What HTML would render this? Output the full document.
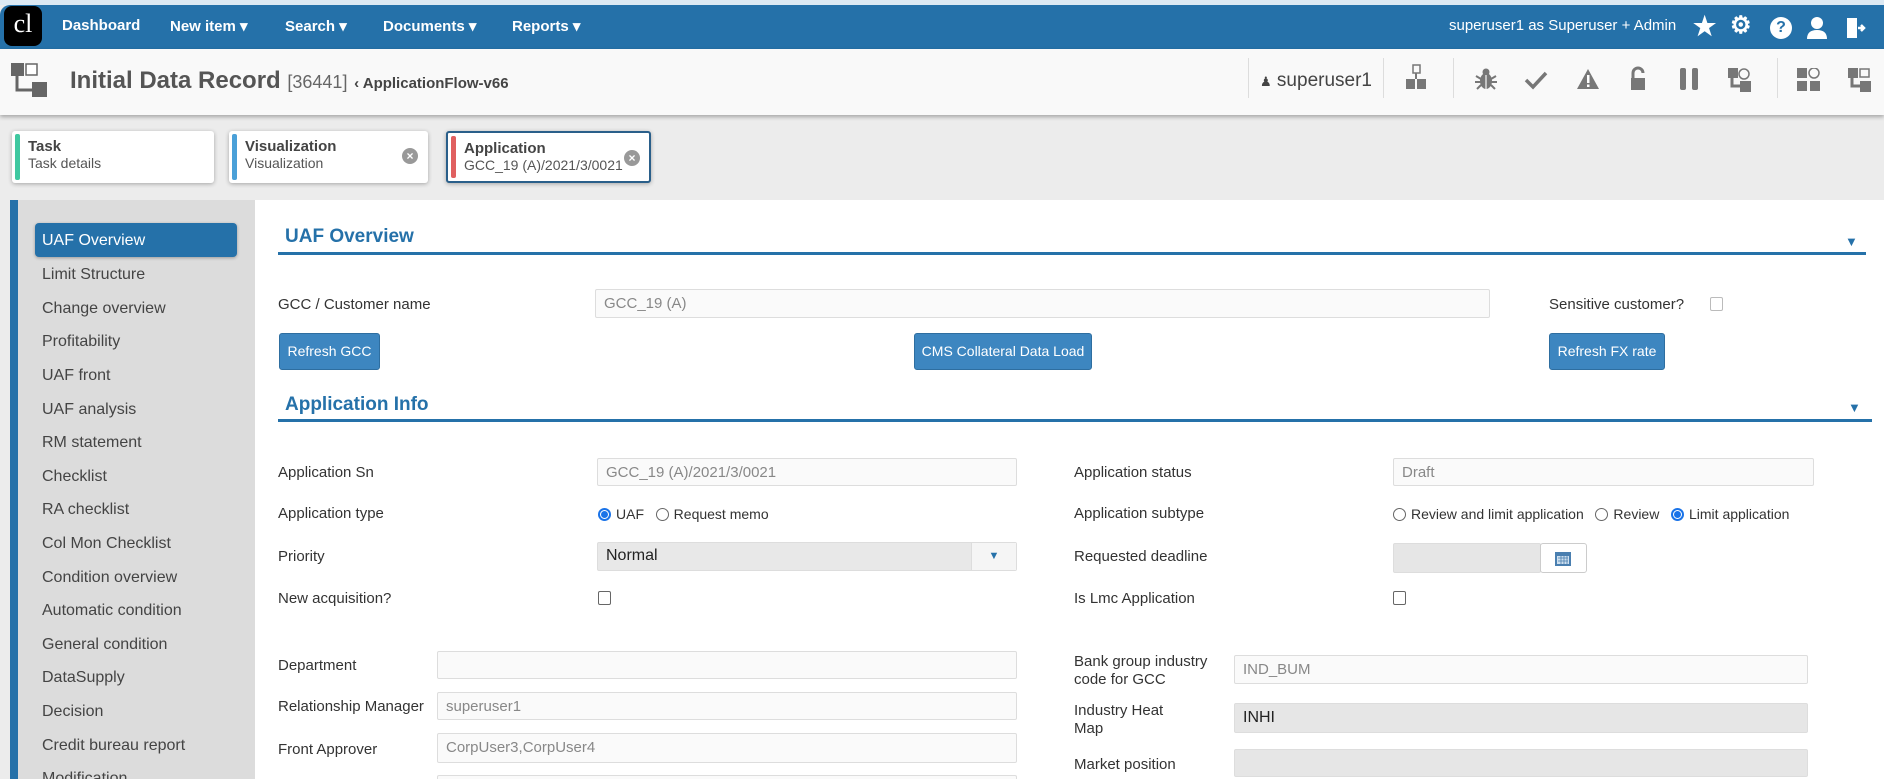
<!DOCTYPE html>
<html style="overflow:hidden;width:1884px;height:779px"><head><meta charset="utf-8"><style>
*{box-sizing:border-box;margin:0;padding:0}
body{width:1884px;height:779px;overflow:hidden;background:#ececec;font-family:"Liberation Sans Narrow","Liberation Sans",sans-serif;color:#333;position:relative}
.a{position:absolute}
.nav{left:0;top:5px;width:1884px;height:44px;background:#2571a9;border-top-left-radius:10px}
.nav .i{position:absolute;top:12px;color:#fff;font-weight:bold;font-size:15px}
.hdr{left:0;top:49px;width:1884px;height:66px;background:#f9f9f9;box-shadow:0 2px 4px rgba(0,0,0,.3)}
.tab{top:131px;height:52px;background:#fff;border-radius:3px;box-shadow:0 1px 4px rgba(0,0,0,.3);padding:7px 0 0 16px;font-size:14px}
.tab b{display:block;font-size:15px;color:#444}
.tab span{color:#555}
.tab .bar{position:absolute;left:3px;top:3px;bottom:3px;width:5px;border-radius:2px}
.x{position:absolute;top:17px;width:16px;height:16px;border-radius:50%;background:#999;color:#fff;font-size:12px;line-height:16px;text-align:center;font-weight:bold}
.side{left:10px;top:200px;width:245px;height:579px;background:#dcdcdc;border-left:8px solid #2571a9}
.si{position:absolute;left:42px;font-size:16px;color:#444}
.main{left:255px;top:200px;width:1629px;height:579px;background:#fff}
.h{position:absolute;font-size:19px;font-weight:bold;color:#2571a9}
.ln{position:absolute;height:3px;background:#2571a9}
.lb{position:absolute;font-size:15px;color:#333;line-height:18px}
.in{position:absolute;background:#fafafa;border:1px solid #ddd;border-radius:2px;font-size:15px;color:#888;padding:5px 8px}
.gr{background:#e6e6e6;color:#222}
.btn{position:absolute;top:333px;height:37px;background:#3d86c0;border:1px solid #2e6ea0;border-radius:3px;color:#fff;font-size:14px;text-align:center;line-height:35px}
.rd{display:inline-block;width:13px;height:13px;border:1px solid #666;border-radius:50%;vertical-align:-2px;margin-right:5px;position:relative}
.rd.on{border:2px solid #1a73e8}
.rd.on:after{content:"";position:absolute;left:1px;top:1px;width:7px;height:7px;border-radius:50%;background:#1a73e8}
.cb{position:absolute;width:13px;height:14px;border:1px solid #666;border-radius:2px}
</style></head><body>
<div class="a" style="left:0;top:0;width:1884px;height:5px;background:#dce9f3"></div>
<div class="a nav">
 <div class="a" style="left:4px;top:1px;width:38px;height:40px;background:#000;border-radius:8px;color:#fff;font-size:26px;text-align:center;line-height:36px;font-family:'Liberation Serif',serif">cl</div>
 <div class="i" style="left:62px">Dashboard</div>
 <div class="i" style="left:170px">New item ▾</div>
 <div class="i" style="left:285px">Search ▾</div>
 <div class="i" style="left:383px">Documents ▾</div>
 <div class="i" style="left:512px">Reports ▾</div>
 <div class="i" style="left:1449px;font-weight:normal;font-size:15px">superuser1 as Superuser + Admin</div>
 <div class="i" style="left:1693px;top:6px;font-size:26px">★</div>
 <div class="i" style="left:1730px;top:6px;font-size:24px">⚙</div>
 <div class="a" style="left:1770px;top:12px;width:22px;height:22px;border-radius:50%;background:#fff;color:#2571a9;font-weight:bold;text-align:center;line-height:22px;font-size:16px">?</div>
 <svg class="a" style="left:1806px;top:11px" width="22" height="24"><circle cx="11" cy="7" r="6" fill="#fff"/><path d="M1 23 Q1 14 11 14 Q21 14 21 23Z" fill="#fff"/></svg>
 <svg class="a" style="left:1845px;top:11px" width="22" height="24"><path d="M2 2h10v20H2z" fill="#fff"/><path d="M13 12h6M16 9l3 3-3 3" stroke="#fff" stroke-width="2.5" fill="none"/></svg>
</div>
<div class="a hdr">
 <svg class="a" style="left:11px;top:14px" width="36" height="36"><rect x="0" y="0" width="13" height="13" fill="#666"/><rect x="15" y="1" width="11" height="11" fill="#fff" stroke="#666" stroke-width="1.5"/><rect x="21" y="19" width="15" height="15" fill="#666"/><path d="M6 13v14h15" stroke="#666" stroke-width="3" fill="none"/></svg>
 <div class="a" style="left:70px;top:18px;font-size:24px;font-weight:bold;color:#555">Initial Data Record <span style="font-weight:normal;font-size:18px;color:#666">[36441]</span> <span style="font-size:15px;color:#444">‹ ApplicationFlow-v66</span></div>
 <div class="a" style="left:1248px;top:9px;width:1px;height:40px;background:#ddd"></div>
 <div class="a" style="left:1260px;top:21px;font-size:19px;color:#444"><span style="font-size:13px">♟</span> superuser1</div>
 <div class="a" style="left:1383px;top:9px;width:1px;height:40px;background:#ddd"></div>
 <div class="a" style="left:1453px;top:9px;width:1px;height:40px;background:#ddd"></div>
 <div class="a" style="left:1777px;top:9px;width:1px;height:40px;background:#ddd"></div>
</div>
<svg class="a" style="left:1405px;top:64px" width="22" height="26"><rect x="8" y="1" width="7" height="8" fill="none" stroke="#777" stroke-width="1.5"/><rect x="1" y="15" width="9" height="10" fill="#777"/><rect x="12" y="15" width="9" height="10" fill="#777"/><path d="M11 9v6" stroke="#777" stroke-width="2"/></svg>
<svg class="a" style="left:1474px;top:67px" width="24" height="24"><ellipse cx="12" cy="14" rx="6" ry="8" fill="#777"/><circle cx="12" cy="5" r="3.5" fill="#777"/><path d="M2 9l5 3M22 9l-5 3M1 15h6M23 15h-6M3 22l4-4M21 22l-4-4" stroke="#777" stroke-width="2"/><path d="M12 8v14" stroke="#f9f9f9" stroke-width="1.2"/></svg>
<svg class="a" style="left:1524px;top:70px" width="24" height="20"><path d="M2 10l7 7L22 3" stroke="#777" stroke-width="3.5" fill="none"/></svg>
<svg class="a" style="left:1576px;top:68px" width="24" height="22"><path d="M12 1L23 21H1Z" fill="#777"/><rect x="11" y="7" width="2.5" height="8" fill="#fff"/><rect x="11" y="16.5" width="2.5" height="2.5" fill="#fff"/></svg>
<svg class="a" style="left:1629px;top:66px" width="18" height="26"><path d="M4 12V7a5 5 0 0 1 10 0" stroke="#777" stroke-width="3" fill="none"/><rect x="2" y="12" width="14" height="12" fill="#777"/></svg>
<div class="a" style="left:1680px;top:68px;width:6px;height:22px;background:#777;border-radius:2px"></div>
<div class="a" style="left:1692px;top:68px;width:6px;height:22px;background:#777;border-radius:2px"></div>
<svg class="a" style="left:1728px;top:68px" width="24" height="24"><rect x="0" y="0" width="10" height="10" fill="#777"/><circle cx="16" cy="6" r="5" fill="none" stroke="#777" stroke-width="1.5"/><rect x="12" y="13" width="11" height="11" fill="#777"/><path d="M4 10v8h8" stroke="#777" stroke-width="3" fill="none"/></svg>
<svg class="a" style="left:1797px;top:68px" width="24" height="24"><rect x="0" y="0" width="10" height="10" fill="#777"/><circle cx="17" cy="5" r="5" fill="none" stroke="#777" stroke-width="1.5"/><rect x="0" y="13" width="10" height="10" fill="#777"/><rect x="13" y="13" width="10" height="10" fill="#777"/></svg>
<svg class="a" style="left:1848px;top:68px" width="24" height="24"><rect x="0" y="0" width="10" height="10" fill="#777"/><rect x="12" y="1" width="9" height="8" fill="none" stroke="#777" stroke-width="1.5"/><rect x="12" y="13" width="11" height="11" fill="#777"/><path d="M4 10v8h8" stroke="#777" stroke-width="3" fill="none"/></svg>

<div class="a tab" style="left:12px;width:202px"><div class="bar" style="background:#3fc8a0"></div><b>Task</b><span>Task details</span></div>
<div class="a tab" style="left:229px;width:199px"><div class="bar" style="background:#4aa0d8"></div><b>Visualization</b><span>Visualization</span><div class="x" style="left:173px">×</div></div>
<div class="a tab" style="left:446px;width:205px;border:2px solid #2a5f8a"><div class="bar" style="background:#e06060"></div><b>Application</b><span>GCC_19 (A)/2021/3/0021</span><div class="x" style="left:176px">×</div></div>

<div class="a side"></div>
<div class="a" style="left:35px;top:223px;width:202px;height:34px;background:#2571a9;border-radius:4px;box-shadow:0 1px 3px rgba(0,0,0,.3)"></div>
<div class="si" style="top:232px;color:#fff">UAF Overview</div>
<div class="si" style="top:266px">Limit Structure</div>
<div class="si" style="top:300px">Change overview</div>
<div class="si" style="top:333px">Profitability</div>
<div class="si" style="top:367px">UAF front</div>
<div class="si" style="top:401px">UAF analysis</div>
<div class="si" style="top:434px">RM statement</div>
<div class="si" style="top:468px">Checklist</div>
<div class="si" style="top:501px">RA checklist</div>
<div class="si" style="top:535px">Col Mon Checklist</div>
<div class="si" style="top:569px">Condition overview</div>
<div class="si" style="top:602px">Automatic condition</div>
<div class="si" style="top:636px">General condition</div>
<div class="si" style="top:669px">DataSupply</div>
<div class="si" style="top:703px">Decision</div>
<div class="si" style="top:737px">Credit bureau report</div>
<div class="si" style="top:770px">Modification</div>

<div class="a main"></div>
<div class="h" style="left:285px;top:226px">UAF Overview</div>
<div class="ln" style="left:278px;top:252px;width:1588px"></div>
<div class="a" style="left:1845px;top:234px;color:#2571a9;font-size:13px">▼</div>
<div class="lb" style="left:278px;top:296px">GCC / Customer name</div>
<div class="in" style="left:595px;top:289px;width:895px;height:29px">GCC_19 (A)</div>
<div class="lb" style="left:1549px;top:296px">Sensitive customer?</div>
<div class="cb" style="left:1710px;top:297px;border-color:#bbb"></div>
<div class="btn" style="left:279px;width:101px">Refresh GCC</div>
<div class="btn" style="left:914px;width:178px">CMS Collateral Data Load</div>
<div class="btn" style="left:1549px;width:116px">Refresh FX rate</div>

<div class="h" style="left:285px;top:394px">Application Info</div>
<div class="ln" style="left:278px;top:419px;width:1594px"></div>
<div class="a" style="left:1848px;top:400px;color:#2571a9;font-size:13px">▼</div>

<div class="lb" style="left:278px;top:464px">Application Sn</div>
<div class="in" style="left:597px;top:458px;width:420px;height:28px">GCC_19 (A)/2021/3/0021</div>
<div class="lb" style="left:1074px;top:464px">Application status</div>
<div class="in" style="left:1393px;top:458px;width:421px;height:28px">Draft</div>

<div class="lb" style="left:278px;top:505px">Application type</div>
<div class="lb" style="left:598px;top:505px;font-size:14px"><span class="rd on"></span>UAF &nbsp; <span class="rd"></span>Request memo</div>
<div class="lb" style="left:1074px;top:505px">Application subtype</div>
<div class="lb" style="left:1393px;top:505px;font-size:14px"><span class="rd"></span>Review and limit application &nbsp; <span class="rd"></span>Review &nbsp; <span class="rd on"></span>Limit application</div>

<div class="lb" style="left:278px;top:548px">Priority</div>
<div class="in gr" style="left:597px;top:542px;width:420px;height:29px;font-size:16px;background:#e8e8e8;padding-top:4px">Normal</div>
<div class="a" style="left:971px;top:543px;width:45px;height:27px;background:#f5f5f5;border-left:1px solid #ddd;color:#2571a9;font-size:11px;text-align:center;line-height:27px">▼</div>
<div class="lb" style="left:1074px;top:548px">Requested deadline</div>
<div class="in gr" style="left:1393px;top:543px;width:148px;height:30px"></div>
<div class="a" style="left:1540px;top:543px;width:47px;height:30px;border:1px solid #ccc;border-radius:3px;background:#fff"></div>
<svg class="a" style="left:1554px;top:549px" width="18" height="18"><rect x="1" y="3" width="16" height="14" fill="#4a7fb0"/><rect x="3" y="7" width="12" height="8" fill="#cfe0ef"/><path d="M4 9h10M4 12h10M7 7v8M10 7v8M13 7v8" stroke="#4a7fb0" stroke-width=".8"/></svg>

<div class="lb" style="left:278px;top:590px">New acquisition?</div>
<div class="cb" style="left:598px;top:591px"></div>
<div class="lb" style="left:1074px;top:590px">Is Lmc Application</div>
<div class="cb" style="left:1393px;top:591px"></div>

<div class="lb" style="left:278px;top:657px">Department</div>
<div class="in" style="left:437px;top:651px;width:580px;height:28px"></div>
<div class="lb" style="left:278px;top:698px">Relationship Manager</div>
<div class="in" style="left:437px;top:692px;width:580px;height:28px">superuser1</div>
<div class="lb" style="left:278px;top:741px">Front Approver</div>
<div class="in" style="left:437px;top:733px;width:580px;height:30px">CorpUser3,CorpUser4</div>
<div class="in" style="left:437px;top:775px;width:580px;height:4px;border-bottom:none"></div>

<div class="lb" style="left:1074px;top:653px">Bank group industry<br>code for GCC</div>
<div class="in" style="left:1234px;top:655px;width:574px;height:29px">IND_BUM</div>
<div class="lb" style="left:1074px;top:702px">Industry Heat<br>Map</div>
<div class="in gr" style="left:1234px;top:703px;width:574px;height:30px;font-size:16px">INHI</div>
<div class="lb" style="left:1074px;top:756px">Market position</div>
<div class="in gr" style="left:1234px;top:749px;width:574px;height:28px"></div>
</body></html>
